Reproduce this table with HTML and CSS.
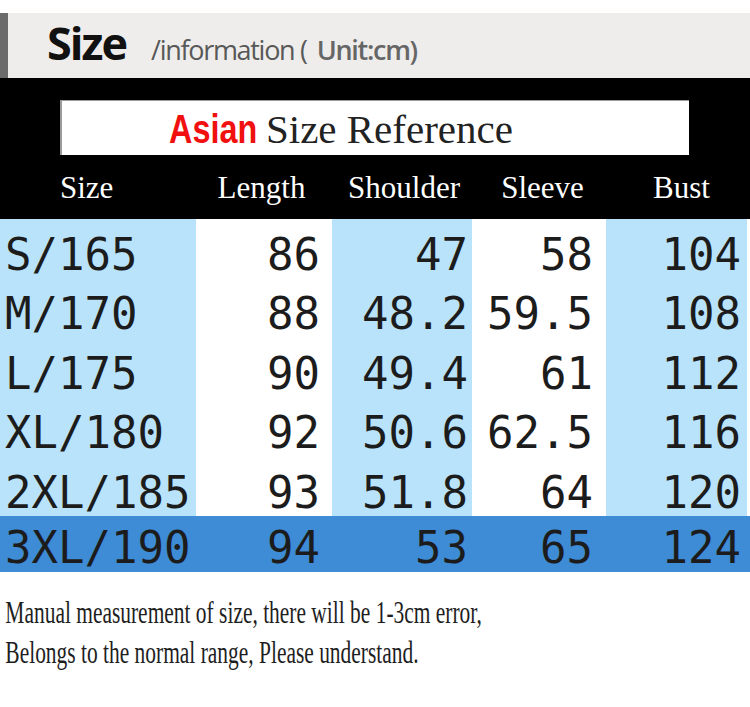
FILE: index.html
```html
<!DOCTYPE html>
<html lang="en">
<head>
<meta charset="utf-8">
<title>Size information</title>
<link rel="stylesheet" href="styles.css">
</head>
<body>
<div class="page">
  <header class="title-bar">
    <span class="title-main">Size</span>
    <span class="title-sub">/information (</span>
    <span class="title-unit">Unit:cm)</span>
  </header>

  <section class="band">
    <div class="ref-box">
      <span class="asian">Asian</span>
      <span class="ref-text">Size Reference</span>
    </div>
    <div class="labels">
      <span class="lbl lbl-size">Size</span>
      <span class="lbl lbl-length">Length</span>
      <span class="lbl lbl-shoulder">Shoulder</span>
      <span class="lbl lbl-sleeve">Sleeve</span>
      <span class="lbl lbl-bust">Bust</span>
      <span></span>
    </div>
  </section>

  <div class="size-table">
    <div class="c blue first">S/165</div><div class="c white n2">86</div><div class="c blue n3">47</div><div class="c white n4">58</div><div class="c blue n5">104</div><div class="c edge"></div>
    <div class="c blue first">M/170</div><div class="c white n2">88</div><div class="c blue n3">48.2</div><div class="c white n4">59.5</div><div class="c blue n5">108</div><div class="c edge"></div>
    <div class="c blue first">L/175</div><div class="c white n2">90</div><div class="c blue n3">49.4</div><div class="c white n4">61</div><div class="c blue n5">112</div><div class="c edge"></div>
    <div class="c blue first">XL/180</div><div class="c white n2">92</div><div class="c blue n3">50.6</div><div class="c white n4">62.5</div><div class="c blue n5">116</div><div class="c edge"></div>
    <div class="c blue first">2XL/185</div><div class="c white n2">93</div><div class="c blue n3">51.8</div><div class="c white n4">64</div><div class="c blue n5">120</div><div class="c edge"></div>
    <div class="c hl first">3XL/190</div><div class="c hl n2">94</div><div class="c hl n3">53</div><div class="c hl n4">65</div><div class="c hl n5">124</div><div class="c hl edge"></div>
  </div>

  <p class="note">Manual measurement of size, there will be 1-3cm error,<br>Belongs to the normal range, Please understand.</p>
</div>
</body>
</html>
```

FILE: styles.css
```css
html, body {
  margin: 0;
  padding: 0;
  background: #ffffff;
}

.page {
  width: 750px;
  padding-top: 13px;
}

/* Title bar */
.title-bar {
  height: 65px;
  box-sizing: border-box;
  background: #eeedeb;
  border-left: 8px solid #6b6b6b;
  display: flex;
  align-items: baseline;
  padding-left: 39px;
  padding-top: 7px;
  white-space: nowrap;
}

.title-main {
  font-family: "Open Sans", "DejaVu Sans", sans-serif;
  font-weight: 700;
  font-size: 45px;
  line-height: 1;
  letter-spacing: -2px;
  color: #111111;
}

.title-sub {
  font-family: "Open Sans", "DejaVu Sans", sans-serif;
  font-size: 27px;
  line-height: 1;
  letter-spacing: -1.3px;
  color: #585858;
  margin-left: 25px;
}

.title-unit {
  font-family: "Open Sans", "DejaVu Sans", sans-serif;
  font-weight: 600;
  font-size: 27px;
  line-height: 1;
  letter-spacing: -1.3px;
  color: #666666;
  margin-left: 10px;
}

/* Black band */
.band {
  background: #000000;
  height: 141px;
  box-sizing: border-box;
  padding-top: 22px;
}

.ref-box {
  margin-left: 60px;
  width: 629px;
  height: 55px;
  box-sizing: border-box;
  background: #ffffff;
  border-top: 1px solid #9a9a9a;
  border-left: 2px solid #9a9a9a;
  display: flex;
  align-items: baseline;
  padding-left: 107px;
  padding-top: 8px;
  white-space: nowrap;
}

.asian {
  display: inline-block;
  font-family: "Liberation Sans", Arial, sans-serif;
  font-weight: 700;
  font-size: 40px;
  line-height: 1;
  color: #f01010;
  transform: scaleX(0.81);
  transform-origin: left bottom;
  margin-right: -12px;
}

.ref-text {
  font-family: "Liberation Serif", "Times New Roman", serif;
  font-size: 41px;
  line-height: 1;
  color: #222222;
}

.labels {
  display: grid;
  grid-template-columns: 196px 136px 140px 134px 141px 3px;
  margin-top: 17px;
}

.lbl {
  font-family: "Liberation Serif", "Times New Roman", serif;
  font-size: 31px;
  line-height: 1;
  color: #ffffff;
  text-align: center;
  white-space: nowrap;
}

.lbl-size { text-align: left; padding-left: 60px; }
.lbl-length { padding-right: 5px; }
.lbl-shoulder { padding-left: 4px; }
.lbl-sleeve { padding-left: 7px; }
.lbl-bust { padding-left: 10px; }

/* Table */
.size-table {
  display: grid;
  grid-template-columns: 196px 136px 140px 134px 141px 3px;
  grid-template-rows: repeat(5, 59.4px) 56px;
}

.c {
  font-family: "DejaVu Sans Mono", "Liberation Mono", monospace;
  font-size: 44px;
  line-height: 1;
  color: #1c1c1c;
  box-sizing: border-box;
  padding-top: 14px;
  white-space: nowrap;
  text-align: right;
}

.blue { background: #b9e3fa; }
.white { background: #ffffff; }
.edge { background: #ffffff; }
.hl { background: #3e8bd6; padding-top: 10px; }

.first { text-align: left; padding-left: 5px; }
.n2 { padding-right: 12px; }
.n3 { padding-right: 4px; }
.n4 { padding-right: 13px; }
.n5 { padding-right: 6px; }

/* Footnote */
.note {
  margin: 20px 0 0 0;
  padding-left: 8px;
  font-family: "Liberation Serif", "Times New Roman", serif;
  font-size: 32px;
  line-height: 40px;
  color: #1e1e1e;
  white-space: nowrap;
  transform: scaleX(0.67);
  transform-origin: left top;
}
```
